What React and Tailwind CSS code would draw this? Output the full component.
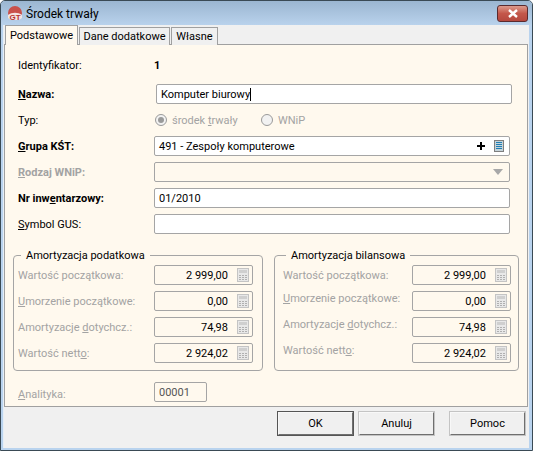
import React from 'react';

const Label = ({ children, bold, muted, className = '' }) => (
    <span className={`w-[136px] shrink-0 ${bold ? 'font-bold' : ''} ${muted ? 'text-[#a3a3a3]' : ''} ${className}`}>
        {children}
    </span>
);

const Input = ({ value, className = '', children }) => (
    <div className={`h-5 flex items-center justify-between pl-1 pr-[5px] border border-[#a5a5a5] rounded-[2px] ${className}`}>
        <span className="flex items-center">{value}</span>
        {children}
    </div>
);

const CalcIcon = () => (
    <svg width="12" height="14" viewBox="0 0 12 14" className="shrink-0">
        <rect x="0.5" y="0.5" width="11" height="13" fill="#e8e8e8" stroke="#c4c4c4" />
        <rect x="2" y="2" width="8" height="3" fill="#cfcfcf" />
        <path d="M2 7.5h2M5 7.5h2M8 7.5h2M2 9.5h2M5 9.5h2M8 9.5h2M2 11.5h2M5 11.5h2M8 11.5h2" stroke="#b0b0b0" />
    </svg>
);

const AmountRow = ({ label, value, labelClass = '', labelWidth = 'w-[136px]' }) => (
    <div className="flex items-center h-5">
        <span className={`text-[#a3a3a3] shrink-0 ${labelWidth} ${labelClass}`}>{label}</span>
        <div className="h-5 w-[99px] flex items-center justify-end gap-[9px] pr-[3px] border border-[#a5a5a5] rounded-[2px]">
            <span>{value}</span>
            <CalcIcon />
        </div>
    </div>
);

const Group = ({ title, className = '', shift = '', labelWidth }) => (
    <fieldset className={`h-[121px] border border-[#a5a5a5] rounded-[4px] ${className}`}>
        <legend className="ml-[3px] px-[5px]">{title}</legend>
        <div className="flex flex-col gap-[6px] mt-[4px]">
            <AmountRow label="Wartość początkowa:" value="2 999,00" labelWidth={labelWidth} />
            <AmountRow label={<><u>U</u>morzenie początkowe:</>} value="0,00" labelClass={shift} labelWidth={labelWidth} />
            <AmountRow label={<>Amortyzacje <u>d</u>otychcz.:</>} value="74,98" labelClass={shift} labelWidth={labelWidth} />
            <AmountRow label={<>Wartość nett<u>o</u>:</>} value="2 924,02" labelClass={shift} labelWidth={labelWidth} />
        </div>
    </fieldset>
);

const Radio = ({ checked }) => (
    <span className="w-3 h-3 rounded-full border border-[#9a9a9a] bg-[#f2f2f2] flex items-center justify-center">
        {checked && <span className="w-[6px] h-[6px] rounded-full bg-[#9a9a9a]" />}
    </span>
);

const Button = ({ children, isDefault, className = '' }) => (
    <button className={`w-[75px] h-[23px] bg-[#f0f0f0] border border-t-[#f8f8f8] border-l-[#f8f8f8] border-r-[#6f6f6f] border-b-[#6f6f6f] ${isDefault ? 'outline outline-1 outline-[#555555]' : 'outline outline-1 outline-[#c4c4c4]'} ${className}`}>
        {children}
    </button>
);

const App = () => {
    return (
        <div className="w-[533px] h-[451px] flex flex-col overflow-hidden bg-[#b9d3ee] border border-[#3a4a55] rounded-t-[5px] text-[11px] leading-none text-black font-['Roboto',sans-serif]">
            <div className="h-[24px] shrink-0 flex items-center pl-[6px] pr-1 bg-gradient-to-b from-[#9bb6d1] to-[#b9d2ec]">
                <svg width="16" height="16" viewBox="0 0 16 16" className="shrink-0">
                    <circle cx="8" cy="8" r="7" fill="#c9504a" />
                    <path d="M1 10c4-3 10-3 14 0v3l-3 2H4l-3-2z" fill="#f4e4e2" />
                    <text x="8" y="15" textAnchor="middle" fontSize="8" fontWeight="700" fill="#b8352f" fontFamily="Liberation Sans, sans-serif">GT</text>
                </svg>
                <span className="ml-[3px] mt-[2px] text-[12px]">Środek trwały</span>
                <div className="ml-auto w-[31px] h-[17px] flex items-center justify-center rounded-[3px] border border-[#5a2a2e] bg-gradient-to-b from-[#dc9a8c] via-[#c4574a] to-[#b5483e]">
                    <svg width="12" height="9" viewBox="0 0 12 9">
                        <path d="M2 1l8 7M10 1l-8 7" stroke="#ffffff" strokeWidth="2.4" />
                    </svg>
                </div>
            </div>

            <div className="flex-1 flex flex-col bg-[#f0f0f0] ml-[2px] mr-[3px] mb-[2px] border-l border-[#e6eef6]">
                <div className="h-[20px] flex items-end pl-[1px] gap-[1px] z-10 -mb-[1px]">
                    <div className="h-[20px] w-[73px] flex items-center justify-center bg-[#fff9ee] border border-b-0 border-[#a0a0a0]">Podstawowe</div>
                    <div className="h-[18px] w-[91px] flex items-center justify-center bg-[#f0f0f0] border border-b-0 border-[#a0a0a0]">Dane dodatkowe</div>
                    <div className="h-[18px] w-[47px] flex items-center justify-center bg-[#f0f0f0] border border-b-0 border-[#a0a0a0]">Własne</div>
                </div>

                <div className="h-[363px] mr-[1px] pl-[13px] pt-[10px] bg-[#fff9ee] border border-[#a0a0a0]">
                    <div className="flex items-center h-5">
                        <Label>Identyfikator:</Label>
                        <span className="font-bold">1</span>
                    </div>

                    <div className="flex items-center h-5 mt-[9px]">
                        <Label bold><u>N</u>azwa:</Label>
                        <Input value={<>Komputer biurowy<span className="inline-block w-px h-[13px] bg-black" /></>} className="ml-[2px] w-[356px] bg-white" />
                    </div>

                    <div className="flex items-center h-5 mt-[6px]">
                        <Label>Typ:</Label>
                        <div className="flex items-center text-[#a3a3a3] ml-[1px]">
                            <Radio checked />
                            <span className="ml-[5px] w-[65px] whitespace-nowrap">środek <u>t</u>rwały</span>
                            <span className="ml-[24px]"><Radio /></span>
                            <span className="ml-[5px]">WNiP</span>
                        </div>
                    </div>

                    <div className="flex items-center h-5 mt-[6px]">
                        <Label bold><u>G</u>rupa KŚT:</Label>
                        <Input value="491 - Zespoły komputerowe" className="w-[356px] bg-white">
                            <div className="flex items-center gap-[9px]">
                                <svg width="8" height="8" viewBox="0 0 8 8">
                                    <path d="M4 0v8M0 4h8" stroke="#000000" strokeWidth="2" />
                                </svg>
                                <svg width="10" height="12" viewBox="0 0 10 12">
                                    <rect x="0.5" y="0.5" width="9" height="11" fill="#c5d3da" stroke="#7f7f7f" />
                                    <path d="M2 2.5h6M2 4.5h6M2 6.5h6M2 8.5h6" stroke="#1f7fb5" />
                                </svg>
                            </div>
                        </Input>
                    </div>

                    <div className="flex items-center h-5 mt-[6px]">
                        <Label bold muted><u>R</u>odzaj WNiP:</Label>
                        <Input className="w-[356px]">
                            <svg width="10" height="6" viewBox="0 0 10 6" className="mr-[1px]">
                                <path d="M0 0h10L5 6z" fill="#a8a8a8" />
                            </svg>
                        </Input>
                    </div>

                    <div className="flex items-center h-5 mt-[6px]">
                        <Label bold>Nr inw<u>e</u>ntarzowy:</Label>
                        <Input value="01/2010" className="w-[356px] bg-white" />
                    </div>

                    <div className="flex items-center h-5 mt-[6px]">
                        <Label><u>S</u>ymbol GUS:</Label>
                        <Input className="w-[356px] bg-white" />
                    </div>

                    <div className="flex mt-[16px] -ml-[5px]">
                        <Group title="Amortyzacja podatkowa" className="w-[250px] pl-1" />
                        <Group title="Amortyzacja bilansowa" className="w-[245px] ml-[11px] pl-[8px]" shift="-mt-[6px]" labelWidth="w-[129px]" />
                    </div>

                    <div className="flex items-center h-5 mt-[11px]">
                        <Label muted className="mt-[5px]"><u>A</u>nalityka:</Label>
                        <div className="h-5 w-[53px] flex items-center pl-1 text-[#555555] border border-[#a5a5a5] rounded-[2px]">00001</div>
                    </div>
                </div>

                <div className="flex mt-[5px] pl-[274px]">
                    <Button isDefault>OK</Button>
                    <Button className="ml-[6px]">Anuluj</Button>
                    <Button className="ml-[16px]">Pomoc</Button>
                </div>
            </div>
        </div>
    );
};

export default App;
